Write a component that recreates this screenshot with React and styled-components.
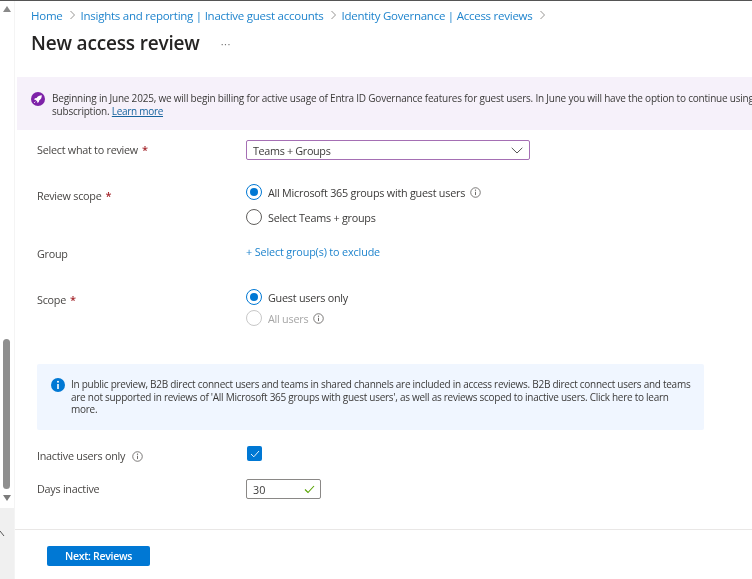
import React from "react";
import styled, { createGlobalStyle } from "styled-components";

const Global = createGlobalStyle`
  html, body { margin: 0; padding: 0; background: #fff; }
  body { font-family: "Open Sans", "Noto Sans", "Liberation Sans", sans-serif; color: #3b3a39; }
  #root { width: 752px; height: 579px; overflow: hidden; }
  * { box-sizing: border-box; }
`;

const Page = styled.div`
  display: flex; width: 752px; height: 579px; overflow: hidden;
  border-top: 1px solid #555; background: #fff; filter: blur(.3px);
`;
const Rail = styled.div`
  flex: 0 0 14px; display: flex; flex-direction: column; align-items: center;
  background: #fff; border-right: 1px solid #f4f4f4;
`;
const ArrowUp = styled.div`
  margin: 5px 0 0 -1px; width: 0; height: 0;
  border-left: 4px solid transparent; border-right: 4px solid transparent; border-bottom: 6px solid #8a8a8a;
`;
const Thumb = styled.div`
  margin: 327px 0 0 -1px; width: 7px; height: 150px; border-radius: 4px; background: #8f8f8f;
`;
const ArrowDown = styled.div`
  margin: 6px 0 0 -1px; width: 0; height: 0;
  border-left: 4px solid transparent; border-right: 4px solid transparent; border-top: 6px solid #7c7c7c;
`;
const RailFoot = styled.div`
  flex: 1; margin-top: 7px; width: 14px; background: #f0f0f0; padding-top: 22px;
  svg { display: block; }
`;
const Main = styled.main`flex: 1; min-width: 0; display: flex; flex-direction: column;`;
const Crumbs = styled.nav`
  display: flex; align-items: center; height: 16px; margin: 6px 0 0 16px;
  font-size: 11.5px; letter-spacing: -.25px; white-space: nowrap;
`;
const Crumb = styled.a`color: #1f84cd;`;
const Sep = styled.svg`width: 7px; height: 10px; margin: 0 5px 0 6px; flex: none;`;
const TitleRow = styled.div`display: flex; align-items: center; height: 28px; margin: 6px 0 0 16px;`;
const Title = styled.h1`margin: 0; font-size: 19px; font-weight: 600; letter-spacing: -.17px; color: #252423;`;
const More = styled.span`margin-left: 21px; font-size: 11px; line-height: 1; color: #777; letter-spacing: .5px;`;
const Banner = styled.section`
  display: flex; gap: 7px; height: 53px; margin: 20px 0 0 2px; padding: 15px 0 0 14px;
  background: #f6f1fa; overflow: hidden; font-size: 10px; letter-spacing: -.21px; line-height: 12.5px; white-space: nowrap;
`;
const BannerText = styled.div`flex: none;`;
const Learn = styled.a`color: #17649e; text-decoration: underline; letter-spacing: -.3px;`;
const Form = styled.div`display: flex; flex-direction: column; padding-left: 22px;`;
const Row = styled.div`
  display: grid; grid-template-columns: 209px 1fr;
  align-items: ${p => p.$center ? "center" : "start"};
  margin-top: ${p => p.$top}px;
`;
const Label = styled.div`font-size: 10.8px; letter-spacing: -.26px; line-height: 16px; color: #484644; padding-top: ${p => p.$pad || 0}px;`;
const Req = styled.span`color: #a4262c; font-size: 11px; font-weight: 600; margin-left: 4px;`;
const SelectBox = styled.div`
  display: flex; align-items: center; justify-content: space-between;
  width: 284px; height: 20px; padding: 0 6px 0 6px;
  border: 1px solid #a56fb4; border-radius: 2px; font-size: 10.8px; letter-spacing: -.33px; color: #3b3a39;
`;
const Radios = styled.div`display: flex; flex-direction: column; gap: ${p => p.$gap}px;`;
const Option = styled.label`
  display: flex; align-items: center; height: 18px; font-size: 10.8px; letter-spacing: -.24px;
  color: ${p => p.$disabled ? "#a6a6a6" : "#3b3a39"};
`;
const Radio = styled.span`
  flex: none; width: 16px; height: 16px; margin-right: 6px; border-radius: 50%;
  border: 1px solid ${p => p.$on ? "#0078d4" : p.$disabled ? "#c8c8c8" : "#605e5c"};
  display: flex; align-items: center; justify-content: center;
  &::after { content: ""; width: 8px; height: 8px; border-radius: 50%; background: ${p => p.$on ? "#0078d4" : "transparent"}; }
`;
const Info = styled.svg`flex: none; width: 11px; height: 11px; margin-left: ${p => p.$left}px; vertical-align: -2px;`;
const AddLink = styled.a`font-size: 10.8px; letter-spacing: -.14px; line-height: 16px; color: #1f84cd;`;
const Notice = styled.section`
  display: flex; gap: 6px; width: 667px; height: 66px; margin-top: 37px; padding: 14px 7px 0 14px;
  background: #f0f6ff; font-size: 10px; letter-spacing: -.27px; line-height: 12.7px; color: #3b3a39; border-radius: 2px;
`;
const NoticeIcon = styled.svg`flex: none; width: 14px; height: 14px;`;
const Check = styled.span`
  display: flex; align-items: center; justify-content: center; margin-left: 1px;
  width: 15px; height: 15px; background: #0078d4; border-radius: 2px;
`;
const NumberBox = styled.div`
  display: flex; align-items: center; justify-content: space-between;
  width: 75px; height: 20px; padding: 0 5px 0 6px;
  border: 1px solid #8a8886; border-radius: 2px; font-size: 10.8px; color: #3b3a39;
`;
const Footer = styled.footer`margin-top: 30px; border-top: 1px solid #e9e7e6; padding: 16px 0 0 32px;`;
const Primary = styled.button`
  display: block; width: 103px; height: 20px; padding: 0; border: 0; border-radius: 2px;
  background: #0078d4; color: #fff; font: 600 10.5px "Open Sans", sans-serif; letter-spacing: -.3px;
`;

const Chevron = () => (
  <Sep viewBox="0 0 7 10"><path d="M1.5 1l4 4-4 4" fill="none" stroke="#8a8886" strokeWidth=".9" /></Sep>
);
const InfoGlyph = ({ left = 5 }) => (
  <Info $left={left} viewBox="0 0 12 12">
    <circle cx="6" cy="6" r="5.2" fill="none" stroke="#605e5c" strokeWidth=".9" />
    <path d="M6 5.2v3.6" stroke="#605e5c" strokeWidth="1" />
    <circle cx="6" cy="3.5" r=".7" fill="#605e5c" />
  </Info>
);

export default function App() {
  return (
    <>
      <Global />
      <Page>
        <Rail>
          <ArrowUp />
          <Thumb />
          <ArrowDown />
          <RailFoot>
            <svg width="8" height="8" viewBox="0 0 8 8"><path d="M0 1l4 5" fill="none" stroke="#555" strokeWidth="1" /></svg>
          </RailFoot>
        </Rail>
        <Main>
          <Crumbs>
            <Crumb>Home</Crumb><Chevron />
            <Crumb>Insights and reporting | Inactive guest accounts</Crumb><Chevron />
            <Crumb>Identity Governance | Access reviews</Crumb><Chevron />
          </Crumbs>
          <TitleRow>
            <Title>New access review</Title>
            <More>···</More>
          </TitleRow>
          <Banner>
            <svg width="14" height="14" viewBox="0 0 14 14" style={{ flex: "none" }}>
              <circle cx="7" cy="7" r="7" fill="#7e22a8" />
              <path d="M10.8 3.2c-2.4.1-4 1-5.2 2.7L4 6.3 3 7.6l1.7.3 1.5 1.5.3 1.7 1.3-1 .4-1.6c1.7-1.2 2.6-2.8 2.6-5.3z" fill="#fff" />
              <path d="M4.3 9.7l-1 1.1" stroke="#fff" strokeWidth="1" />
            </svg>
            <BannerText>
              Beginning in June 2025, we will begin billing for active usage of Entra ID Governance features for guest users. In June you will have the option to continue using<br />
              subscription. <Learn>Learn more</Learn>
            </BannerText>
          </Banner>
          <Form>
            <Row $center $top={10}>
              <Label>Select what to review<Req>*</Req></Label>
              <SelectBox>
                Teams + Groups
                <svg width="12" height="7" viewBox="0 0 12 7"><path d="M.7.8L6 6 11.3.8" fill="none" stroke="#555" strokeWidth="1" /></svg>
              </SelectBox>
            </Row>
            <Row $top={23}>
              <Label $pad={5}>Review scope<Req>*</Req></Label>
              <Radios $gap={7}>
                <Option><Radio $on />All Microsoft 365 groups with guest users<InfoGlyph /></Option>
                <Option><Radio />Select Teams + groups</Option>
              </Radios>
            </Row>
            <Row $top={18}>
              <Label $pad={2}>Group</Label>
              <AddLink>+ Select group(s) to exclude</AddLink>
            </Row>
            <Row $top={26}>
              <Label $pad={4}>Scope<Req>*</Req></Label>
              <Radios $gap={3}>
                <Option><Radio $on />Guest users only</Option>
                <Option $disabled><Radio $disabled />All users<InfoGlyph /></Option>
              </Radios>
            </Row>
            <Notice>
              <NoticeIcon viewBox="0 0 14 14">
                <circle cx="7" cy="7" r="7" fill="#0078d4" />
                <circle cx="7" cy="3.7" r="1" fill="#fff" />
                <path d="M7 6v5" stroke="#fff" strokeWidth="1.6" />
              </NoticeIcon>
              <div>In public preview, B2B direct connect users and teams in shared channels are included in access reviews. B2B direct connect users and teams are not supported in reviews of 'All Microsoft 365 groups with guest users', as well as reviews scoped to inactive users. Click here to learn more.</div>
            </Notice>
            <Row $top={16}>
              <Label $pad={2}>Inactive users only<InfoGlyph left={7} /></Label>
              <Check>
                <svg width="10" height="8" viewBox="0 0 10 8"><path d="M1 4l2.8 2.8L9 1" fill="none" stroke="#fff" strokeWidth=".9" /></svg>
              </Check>
            </Row>
            <Row $center $top={15}>
              <Label>Days inactive</Label>
              <NumberBox>
                30
                <svg width="11" height="9" viewBox="0 0 11 9"><path d="M1 4.5L4 7.5 10 1" fill="none" stroke="#57a300" strokeWidth="1.1" /></svg>
              </NumberBox>
            </Row>
          </Form>
          <Footer><Primary>Next: Reviews</Primary></Footer>
        </Main>
      </Page>
    </>
  );
}
